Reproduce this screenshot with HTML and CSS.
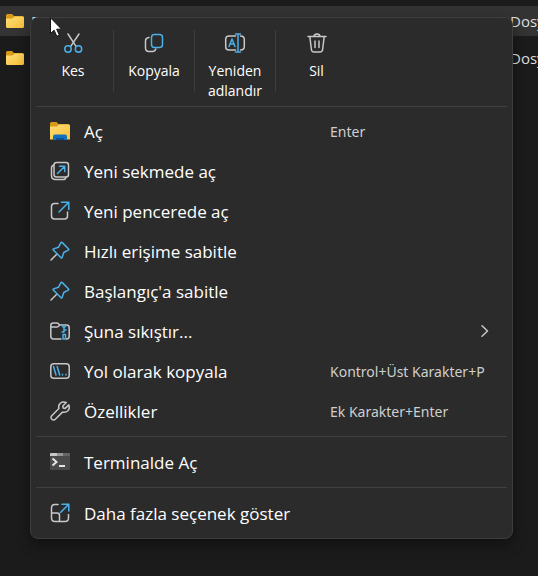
FILE: index.html
```
<!DOCTYPE html>
<html lang="tr">

<head>
    <meta charset="UTF-8">
    <title>Dosya Gezgini</title>
    <link rel="stylesheet" href="styles.css">
</head>

<body>

    <!-- shared shapes -->
    <svg class="defs" aria-hidden="true">
        <defs>
            <linearGradient id="gold" x1="0" y1="0" x2="1" y2="1">
                <stop offset="0" stop-color="#ffdf78" />
                <stop offset="1" stop-color="#f7bf38" />
            </linearGradient>
            <symbol id="folder" viewBox="0 0 20 20">
                <path fill="#d99a1a" d="M1 4.500Q1 3 2.500 3H7l2 2h8.500Q19 5 19 6.500V12H1z" />
                <path fill="url(#gold)" d="M1 7.500h6.500L9.500 5.500h8Q19 5.500 19 7v8.500Q19 17 17.500 17h-15Q1 17 1 15.500z" />
            </symbol>
            <symbol id="pin" viewBox="0 0 20 20">
                <path class="gray" d="M6.500 13.500L1 19" />
                <path class="blue" d="M12.300 1.600l6.100 6.100q.8 .9-.3 1.500l-4.300 2.300-1.700 5q-.4 .9-1.100 .2L3.300 9q-.7-.7 .2-1.100l5-1.700 2.300-4.300q.6-1.100 1.500-.3z" />
            </symbol>
        </defs>
    </svg>

    <main class="files">
        <div class="file selected">
            <svg class="folder"><use href="#folder" /></svg>
            <span class="name">F</span>
            <span class="type">Dosya</span>
        </div>
        <div class="file">
            <svg class="folder"><use href="#folder" /></svg>
            <span class="name"></span>
            <span class="type">Dosya</span>
        </div>
    </main>

    <div class="menu" role="menu">
        <div class="toolbar">
            <button class="tool">
                <svg class="icon" viewBox="0 0 20 20">
                    <path class="gray" d="M5 1l8 12.300M16 1L7.700 13.300" />
                    <circle class="blue" cx="5" cy="16" r="3.200" />
                    <circle class="blue" cx="15.500" cy="16" r="3.200" />
                </svg>
                <span>Kes</span>
            </button>
            <button class="tool">
                <svg class="icon" viewBox="0 0 20 20">
                    <path class="gray" d="M5 4.500Q1.500 5 1.500 8v7q0 3.500 3.500 3.500h3.500q2.500 0 3.300-2.500" />
                    <rect class="blue" x="7.500" y="1.500" width="11" height="13" rx="3" />
                </svg>
                <span>Kopyala</span>
            </button>
            <button class="tool">
                <svg class="icon" viewBox="0 0 20 20">
                    <path class="gray" d="M10.500 3H4Q.7 3 .7 6v8q0 3 3.300 3h6.500M15.500 3q3.800 0 3.800 3.500v7q0 3.500-3.800 3.500" />
                    <path class="blue" d="M4 13.500L7 6l3 7.500M5 11h4M10.500 1h5M13 1v18M10.500 19h5" />
                </svg>
                <span>Yeniden adlandır</span>
            </button>
            <button class="tool">
                <svg class="icon" viewBox="0 0 20 20">
                    <path class="gray" d="M1 3.500h18M7 3.500Q7.200 1 10 1t3 2.500M2.800 3.500l1.600 13q.3 2.500 2.600 2.500h6q2.300 0 2.600-2.500l1.600-13M8 8v6.500M12 8v6.500" />
                </svg>
                <span>Sil</span>
            </button>
        </div>

        <div class="group">
            <button class="item" role="menuitem">
                <svg class="icon" viewBox="0 0 20 20">
                    <path fill="#d99a1a" d="M0 2.500Q0 1 1.500 1h5l2 2H18q2 0 2 1.500v5H0z" />
                    <path fill="url(#gold)" d="M0 5.500h7l2-2h9.500Q20 3.500 20 5v13.500H0z" />
                    <path fill="#1270bd" d="M3 19v-3.500q0-2 2-2h10q2 0 2 2V19z" />
                    <path fill="#0a4f94" d="M6 17h8v2H6z" />
                </svg>
                <span class="label">Aç</span>
                <kbd>Enter</kbd>
            </button>
            <button class="item" role="menuitem">
                <svg class="icon" viewBox="0 0 20 20">
                    <rect class="gray" x="4" y="1.500" width="14.500" height="14.500" rx="2.500" />
                    <path class="gray" d="M4 4Q1.500 4.500 1.500 7v7.500q0 4 4 4H13q2.500 0 3-2" />
                    <path class="blue" d="M7.500 12.500l7-7M9.500 5.200h5.200v5.200" />
                </svg>
                <span class="label">Yeni sekmede aç</span>
            </button>
            <button class="item" role="menuitem">
                <svg class="icon" viewBox="0 0 20 20">
                    <path class="gray" d="M8 2.500H4.500q-3 0-3 3v9.500q0 3 3 3h10q3 0 3-3v-4" />
                    <path class="blue" d="M9 11l9.500-9.500M11.500 1.200h7.300v7.300" />
                </svg>
                <span class="label">Yeni pencerede aç</span>
            </button>
            <button class="item" role="menuitem">
                <svg class="icon"><use href="#pin" /></svg>
                <span class="label">Hızlı erişime sabitle</span>
            </button>
            <button class="item" role="menuitem">
                <svg class="icon"><use href="#pin" /></svg>
                <span class="label">Başlangıç'a sabitle</span>
            </button>
            <button class="item" role="menuitem">
                <svg class="icon" viewBox="0 0 20 20">
                    <path class="gray" d="M11 18H3.500Q.8 18 .8 15.300V4.500Q.8 2 3.500 2h3.200q1 0 1.800 .8l1.300 1.200h6.700q2.700 0 2.700 2.700v8.600q0 2.700-2.700 2.700M.8 6h6q1 0 1.700-.8L9.800 4" />
                    <path class="blue" d="M12 4.500l2 2.500 2-2.500M14 7v4M14 9h2M14 11h-2M13 13.500h2.500V18H13z" />
                </svg>
                <span class="label">Şuna sıkıştır...</span>
                <svg class="chevron" viewBox="0 0 8 12">
                    <path class="gray" d="M1 .8L6.500 6 1 11.200" />
                </svg>
            </button>
            <button class="item" role="menuitem">
                <svg class="icon" viewBox="0 0 20 20">
                    <rect class="gray" x=".8" y="2.800" width="18.400" height="14.400" rx="3" />
                    <path class="blue" d="M3.500 5.500l2.500 8.500M7.200 5.500l2.500 8.500M12.500 13.200v.8M16 13.200v.8" />
                </svg>
                <span class="label">Yol olarak kopyala</span>
                <kbd>Kontrol+Üst Karakter+P</kbd>
            </button>
            <button class="item" role="menuitem">
                <svg class="icon" viewBox="0 0 20 20">
                    <path class="gray" d="M16.300 1.500L12.800 5l.4 2 2 .4 3.600-3.500q1.400 3.500-.9 5.900-2.300 2.200-5.400 1.300L5.300 18.300q-1.300 1.200-2.900 .3-2.400-1.700-.7-3.900L8.900 7.500Q8 4.500 10.300 2.200 12.700 .1 16.300 1.500z" />
                </svg>
                <span class="label">Özellikler</span>
                <kbd>Ek Karakter+Enter</kbd>
            </button>
        </div>

        <div class="group">
            <button class="item" role="menuitem">
                <svg class="icon" viewBox="0 0 20 20">
                    <path fill="#4a4a4a" d="M0 2h20v15q0 1-1 1H1q-1 0-1-1z" />
                    <path fill="#c8c8c8" d="M0 2q0-1 1-1h6v3H0z" />
                    <path fill="#969696" d="M7 1h6v3H7z" />
                    <path fill="#666" d="M13 1h6q1 0 1 1v2h-7z" />
                    <path fill="none" stroke="#e4e4e4" stroke-width="2" d="M2.500 6.500L6.500 10l-4 3.500M9 14h6" />
                </svg>
                <span class="label">Terminalde Aç</span>
            </button>
        </div>

        <div class="group">
            <button class="item" role="menuitem">
                <svg class="icon" viewBox="0 0 20 20">
                    <path class="gray" d="M8 1.500H5q-3.500 0-3.500 3.500v10q0 3.500 3.500 3.500h10q3.500 0 3.500-3.500v-3.500M1.500 10H7q2.500 0 2.500 2.500v6" />
                    <path class="blue" d="M10.500 9.500l8-8M12 1.200h6.800V8" />
                </svg>
                <span class="label">Daha fazla seçenek göster</span>
            </button>
        </div>
    </div>

    <svg class="pointer" viewBox="0 0 12 20" aria-hidden="true">
        <path d="M.5 .8v15.700l3.600-3.300 2.700 6.100 2.600-1.100-2.700-6h4.900z" />
    </svg>

</body>

</html>
```
FILE: styles.css
```
* {
    box-sizing: border-box;
}

body {
    margin: 0;
    min-height: 100vh;
    background: #1b1b1b;
    color: #fff;
    font-family: "Open Sans", "Noto Sans", sans-serif;
    overflow: hidden;
}

.defs {
    position: absolute;
    width: 0;
    height: 0;
}

/* file list */
.files {
    display: flex;
    flex-direction: column;
    gap: 7px;
    padding-top: 6px;
}

.file {
    display: flex;
    align-items: center;
    height: 30px;
    padding-left: 5px;
    font-size: 15px;
    color: #dedede;
    white-space: nowrap;
}

.file.selected {
    background: #333;
}

.folder {
    width: 20px;
    height: 20px;
    margin-right: 6px;
}

.name {
    flex: 1;
}

.type {
    width: 28px;
}

/* context menu */
.menu {
    position: absolute;
    top: 17px;
    left: 30px;
    right: 25px;
    background: #2b2b2b;
    border: 1px solid #3d3d3d;
    border-radius: 8px;
    box-shadow: 0 6px 14px rgba(0, 0, 0, 0.4);
}

.menu button {
    background: none;
    border: 0;
    padding: 0;
    color: inherit;
    font-family: inherit;
}

.menu button:hover {
    background: #383838;
}

.toolbar {
    display: flex;
    padding: 12px 2px 14px;
}

.tool {
    display: flex;
    flex-direction: column;
    align-items: center;
    gap: 8px;
    width: 81px;
    height: 62px;
    font-size: 14px;
    line-height: 20px;
}

.menu .tool:not(:last-child) {
    border-right: 1px solid #3d3d3d;
}

.tool .icon {
    margin-top: 3px;
}

.group {
    margin: 0 5px;
    padding: 5px 0;
    border-top: 1px solid #404040;
}

.toolbar + .group {
    padding-top: 4px;
}

.item {
    display: flex;
    align-items: center;
    width: 100%;
    height: 40px;
    font-size: 17px;
    text-align: left;
}

.menu .item {
    padding: 0 14px;
}

.icon {
    width: 20px;
    height: 20px;
    flex: none;
    overflow: visible;
}

.item .icon {
    margin-right: 14px;
}

.label {
    flex: 1;
    white-space: nowrap;
}

kbd {
    width: 163px;
    font-family: "Noto Sans", "Open Sans", sans-serif;
    font-size: 14px;
    color: #cfcfcf;
    white-space: nowrap;
}

.chevron {
    width: 8px;
    height: 12px;
    margin-right: 4px;
}

.gray,
.blue {
    fill: none;
    stroke: #c8c8c8;
    stroke-width: 1.5;
    stroke-linecap: round;
    stroke-linejoin: round;
}

.blue {
    stroke: #4cb0e8;
}

.pointer {
    position: absolute;
    top: 17px;
    left: 50px;
    width: 12px;
    height: 20px;
    fill: #fff;
    stroke: #111;
    stroke-width: 1;
}
```
